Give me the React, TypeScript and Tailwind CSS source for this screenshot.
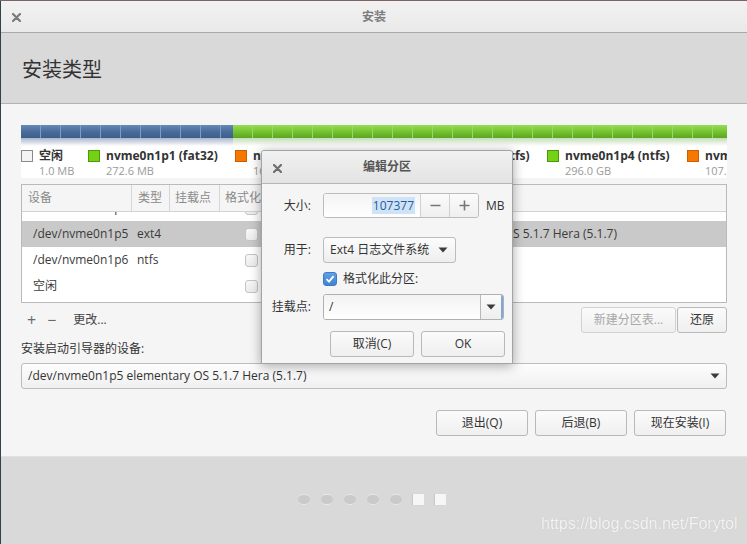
import React from "react";

const Caret = ({ className = "" }: { className?: string }) => (
  <svg width="10" height="6" viewBox="0 0 10 6" className={className}>
    <path d="M0.5 0.5 L9.5 0.5 L5 5.5 Z" fill="#3c3c3c" />
  </svg>
);

const Close = ({ color = "#7a7a7a" }: { color?: string }) => (
  <svg width="9" height="9" viewBox="0 0 9 9">
    <path d="M1 1 L8 8 M8 1 L1 8" stroke={color} strokeWidth="2.2" strokeLinecap="round" />
  </svg>
);

const Check = () => (
  <div className="w-[13px] h-[13px] rounded-[3px] border border-[#c4c4c4] bg-linear-to-b from-[#f8f8f8] to-[#ececec]" />
);

const Segs = ({ n, line }: { n: number; line: string }) => (
  <>
    {Array.from({ length: n }).map((_, i) => (
      <div key={i} className={`w-[20px] h-full shrink-0 border-r ${line}`} />
    ))}
  </>
);

const legend = [
  { name: "空闲", size: "1.0 MB", w: "w-[67px]", sq: "bg-[#f4f4f4] border-[#8a8a8a]" },
  { name: "nvme0n1p1 (fat32)", size: "272.6 MB", w: "w-[147px]", sq: "bg-[#73d216] border-[#4e9a06]" },
  { name: "nvme0n1p2 (linux-swap)", size: "16.0 GB", w: "w-[172px]", sq: "bg-[#f57900] border-[#ce5c00]" },
  { name: "nvme0n1p3 (ntfs)", size: "100.0 GB", w: "w-[140px]", sq: "bg-[#3465a4] border-[#204a87]" },
  { name: "nvme0n1p4 (ntfs)", size: "296.0 GB", w: "w-[140px]", sq: "bg-[#73d216] border-[#4e9a06]" },
  { name: "nvme0n1p5 (ext4)", size: "107.4 GB", w: "w-[40px]", sq: "bg-[#f57900] border-[#ce5c00]" },
];

const Row = ({
  dev,
  type,
  sys = "",
  sel = false,
  size = "",
  used = "",
}: {
  dev: string;
  type: string;
  sys?: string;
  sel?: boolean;
  size?: string;
  used?: string;
}) => (
  <div className={`flex items-center h-[26px] shrink-0 text-[12px] text-[#3a3a3a] ${sel ? "bg-[#c9c9c9]" : ""}`}>
    <div className="w-[109px] pl-[11px] whitespace-nowrap">{dev}</div>
    <div className="w-[38px] pl-[6px]">{type}</div>
    <div className="w-[50px] pl-[6px]"></div>
    <div className="w-[55px] pl-[26px]">
      <Check />
    </div>
    <div className="w-[70px] pl-[6px] whitespace-nowrap">{size}</div>
    <div className="w-[87px] pl-[6px] whitespace-nowrap">{used}</div>
    <div className="flex-1 pl-[6px] whitespace-nowrap">{sys}</div>
  </div>
);

const Btn = ({ children, className = "", disabled = false }: { children: React.ReactNode; className?: string; disabled?: boolean }) => (
  <div
    className={`flex items-center justify-center h-[26px] rounded-[3px] border text-[12px] bg-linear-to-b from-[#fbfbfb] to-[#efefef] ${
      disabled ? "border-[#d2d2d2] text-[#a8a8a8]" : "border-[#b9b9b9] text-[#333]"
    } ${className}`}
  >
    {children}
  </div>
);

export default function App() {
  return (
    <div className="relative w-[747px] h-[544px] overflow-hidden bg-[#34404a] font-['Open_Sans','Noto_Sans_CJK_SC',sans-serif]">
      <div className="h-[1px] bg-[#7d6363]" />
      <div className="ml-[1px] h-[543px] flex flex-col bg-[#f5f5f5]">
        {/* title bar */}
        <div className="relative h-[32px] shrink-0 flex items-center justify-center bg-linear-to-b from-[#f2f2f2] to-[#e9e9e9] border-b border-[#a9a9a9]">
          <div className="absolute left-[11px] top-[12px]">
            <Close />
          </div>
          <span className="text-[12px] font-bold text-[#7c7c7c] pt-[1px]">安装</span>
        </div>
        {/* header */}
        <div className="h-[71px] shrink-0 flex items-center pl-[21px] bg-[#d9d9d9] border-b border-[#b3b3b3]">
          <span className="text-[20px] text-[#333] pt-[4px]">安装类型</span>
        </div>
        {/* content */}
        <div className="h-[353px] shrink-0 flex flex-col px-[20px] pt-[21px] bg-[#f5f5f5] border-b border-[#e2e2e2]">
          {/* partition bar */}
          <div className="flex h-[13px] overflow-hidden">
            <div className="w-[212px] h-full flex overflow-hidden bg-linear-to-b from-[#6689b8] via-[#4a6d9c] to-[#3d5e8b]">
              <Segs n={11} line="border-[#7f9cc4]" />
            </div>
            <div className="flex-1 h-full flex overflow-hidden bg-linear-to-b from-[#96dc55] via-[#76c52e] to-[#5ba424]">
              <Segs n={25} line="border-[#9ad865]" />
            </div>
          </div>
          {/* legend */}
          <div className="h-[40px] bg-white flex flex-col overflow-hidden">
            <div className="flex h-[8px] shrink-0">
              <div className="w-[212px] bg-linear-to-b from-[#a9b7cb] to-white" />
              <div className="flex-1 bg-linear-to-b from-[#c6dcb6] to-white" />
            </div>
            <div className="flex mt-[3px] whitespace-nowrap">
              {legend.map((l, i) => (
                <div key={i} className={`flex gap-[6px] shrink-0 ${l.w} ${i === 5 ? "overflow-hidden" : ""}`}>
                  <div className={`w-[12px] h-[12px] mt-[1px] border shrink-0 ${l.sq}`} />
                  <div className="flex flex-col">
                    <span className="text-[12px] leading-[14px] font-bold text-[#333]">{l.name}</span>
                    <span className="text-[11px] leading-[15px] text-[#9a9a9a]">{l.size}</span>
                  </div>
                </div>
              ))}
            </div>
          </div>
          {/* table */}
          <div className="mt-[6px] h-[119px] border border-[#bababa] bg-white flex flex-col overflow-hidden">
            <div className="h-[27px] shrink-0 flex items-stretch bg-[#f5f5f5] border-b border-[#d2d2d2] text-[12px] text-[#8a8a8a]">
              <div className="w-[109px] pl-[6px] flex items-center">设备</div>
              <div className="w-[38px] pl-[6px] flex items-center border-l border-[#d6d6d6]">类型</div>
              <div className="w-[50px] pl-[5px] flex items-center border-l border-[#d6d6d6]">挂载点</div>
              <div className="w-[55px] pl-[5px] flex items-center border-l border-[#d6d6d6] whitespace-nowrap">格式化?</div>
              <div className="w-[70px] pl-[5px] flex items-center border-l border-[#d6d6d6]">大小</div>
              <div className="w-[87px] pl-[5px] flex items-center border-l border-[#d6d6d6]">已用</div>
              <div className="flex-1 pl-[5px] flex items-center border-l border-[#d6d6d6]">系统</div>
            </div>
            <div className="flex flex-col">
              <div className="h-[9px] shrink-0 overflow-hidden flex flex-col justify-end">
                <Row dev="/dev/nvme0n1p4" type="ntfs" size="296015 MB" used="未知" />
              </div>
              <Row dev="/dev/nvme0n1p5" type="ext4" sel size="107377 MB" used="未知" sys="elementary OS 5.1.7 Hera (5.1.7)" />
              <Row dev="/dev/nvme0n1p6" type="ntfs" size="" used="" />
              <Row dev="空闲" type="" />
            </div>
          </div>
          {/* table buttons */}
          <div className="mt-[4px] flex items-center h-[26px]">
            <span className="ml-[6px] text-[16px] text-[#6a6a6a] leading-none">+</span>
            <span className="ml-[11px] text-[16px] text-[#6a6a6a] leading-none">−</span>
            <span className="ml-[17px] text-[12px] text-[#444]">更改...</span>
            <div className="flex-1" />
            <Btn disabled className="w-[95px]">新建分区表...</Btn>
            <Btn className="w-[50px] ml-[1px]">还原</Btn>
          </div>
          <div className="mt-[8px] text-[12px] text-[#333] leading-[16px]">安装启动引导器的设备:</div>
          <div className="mt-[6px] h-[26px] flex items-center px-[6px] rounded-[3px] border border-[#bcbcbc] bg-linear-to-b from-[#fdfdfd] to-[#f0f0f0] text-[12px] text-[#333]">
            <span className="flex-1">/dev/nvme0n1p5 elementary OS 5.1.7 Hera (5.1.7)</span>
            <Caret />
          </div>
          <div className="mt-[21px] flex justify-end gap-[7px] pr-[1px]">
            <Btn className="w-[92px]">退出(Q)</Btn>
            <Btn className="w-[92px]">后退(B)</Btn>
            <Btn className="w-[92px]">现在安装(I)</Btn>
          </div>
        </div>
        {/* bottom */}
        <div className="flex-1 bg-[#d9d9d9] relative">
          <div className="flex items-center gap-[11px] pl-[297px] pt-[37px]">
            {[0, 1, 2, 3, 4].map((i) => (
              <div key={i} className="w-[12px] h-[11px] rounded-[5px] bg-[#cacaca] border-y border-[#e8e8e8]" />
            ))}
            {[0, 1].map((i) => (
              <div key={i} className="w-[11px] h-[11px] bg-[#f6f6f6] shadow-[-1px_0_1px_rgba(0,0,0,0.08)]" />
            ))}
          </div>
          <div className="absolute left-[540px] top-[55px] text-[16px] text-[#f4f4f4] font-['Liberation_Sans',sans-serif] [text-shadow:0_0_1px_rgba(0,0,0,0.15)]">
            https://blog.csdn.net/Forytol
          </div>
        </div>
      </div>

      {/* dialog */}
      <div className="absolute left-[261px] top-[150px] w-[252px] h-[214px] flex flex-col bg-[#f5f5f5] border border-[#a3a3a3] rounded-t-[3px] shadow-[0_2px_12px_rgba(0,0,0,0.35)]">
        <div className="relative h-[33px] shrink-0 flex items-center justify-center bg-linear-to-b from-[#f1f1f1] to-[#e3e3e3] border-b border-[#b7b7b7] rounded-t-[3px]">
          <div className="absolute left-[11px] top-[13px]">
            <Close color="#6e6e6e" />
          </div>
          <span className="text-[12px] font-bold text-[#555]">编辑分区</span>
        </div>
        <div className="flex flex-col pt-[9px] text-[12px] text-[#333]">
          <div className="flex items-center h-[25px]">
            <div className="w-[49px] text-right">大小:</div>
            <div className="ml-[12px] w-[156px] h-[25px] flex rounded-[3px] border border-[#bcbcbc] bg-white overflow-hidden">
              <div className="flex-1 flex items-center justify-end pr-[5px] bg-linear-to-b from-[#f4f4f4] to-white">
                <span className="bg-[#cfe2f6] text-[#255c9e] px-[1px] leading-[17px]">107377</span>
              </div>
              <div className="w-[29px] flex items-center justify-center border-l border-[#d0d0d0] bg-linear-to-b from-[#fbfbfb] to-[#efefef]">
                <svg width="11" height="11" viewBox="0 0 11 11"><path d="M0.5 5.5 H10.5" stroke="#777" strokeWidth="1.6" /></svg>
              </div>
              <div className="w-[29px] flex items-center justify-center border-l border-[#d0d0d0] bg-linear-to-b from-[#fbfbfb] to-[#efefef]">
                <svg width="11" height="11" viewBox="0 0 11 11"><path d="M0.5 5.5 H10.5 M5.5 0.5 V10.5" stroke="#777" strokeWidth="1.6" /></svg>
              </div>
            </div>
            <span className="ml-[7px]">MB</span>
          </div>
          <div className="flex items-center h-[26px] mt-[19px]">
            <div className="w-[49px] text-right">用于:</div>
            <div className="ml-[12px] w-[133px] h-[26px] flex items-center pl-[6px] pr-[7px] rounded-[3px] border border-[#bcbcbc] bg-linear-to-b from-[#fcfcfc] to-[#eeeeee]">
              <span className="flex-1">Ext4 日志文件系统</span>
              <Caret />
            </div>
          </div>
          <div className="flex items-center h-[14px] mt-[9px] pl-[61px]">
            <div className="w-[14px] h-[14px] rounded-[3px] border border-[#3d7cc4] bg-linear-to-b from-[#5fa0e6] to-[#3f83d0] flex items-center justify-center">
              <svg width="10" height="10" viewBox="0 0 10 10"><path d="M1.5 5.2 L4 7.6 L8.6 2.2" fill="none" stroke="white" strokeWidth="1.8" /></svg>
            </div>
            <span className="ml-[6px]">格式化此分区:</span>
          </div>
          <div className="flex items-center h-[26px] mt-[8px]">
            <div className="w-[49px] text-right">挂载点:</div>
            <div className="ml-[12px] w-[181px] h-[26px] flex rounded-[3px] border border-[#b0b0b0] overflow-hidden">
              <div className="flex-1 flex items-center pl-[5px] bg-linear-to-b from-[#f3f3f3] to-white">/</div>
              <div className="w-[23px] flex items-center justify-center border-l border-[#b8b8b8] bg-linear-to-b from-[#fbfbfb] to-[#eeeeee] border-r-2 border-r-[#7ea8da]">
                <Caret />
              </div>
            </div>
          </div>
          <div className="flex mt-[11px] pl-[68px] gap-[7px]">
            <Btn className="w-[84px]">取消(C)</Btn>
            <Btn className="w-[84px]">OK</Btn>
          </div>
        </div>
      </div>
    </div>
  );
}
